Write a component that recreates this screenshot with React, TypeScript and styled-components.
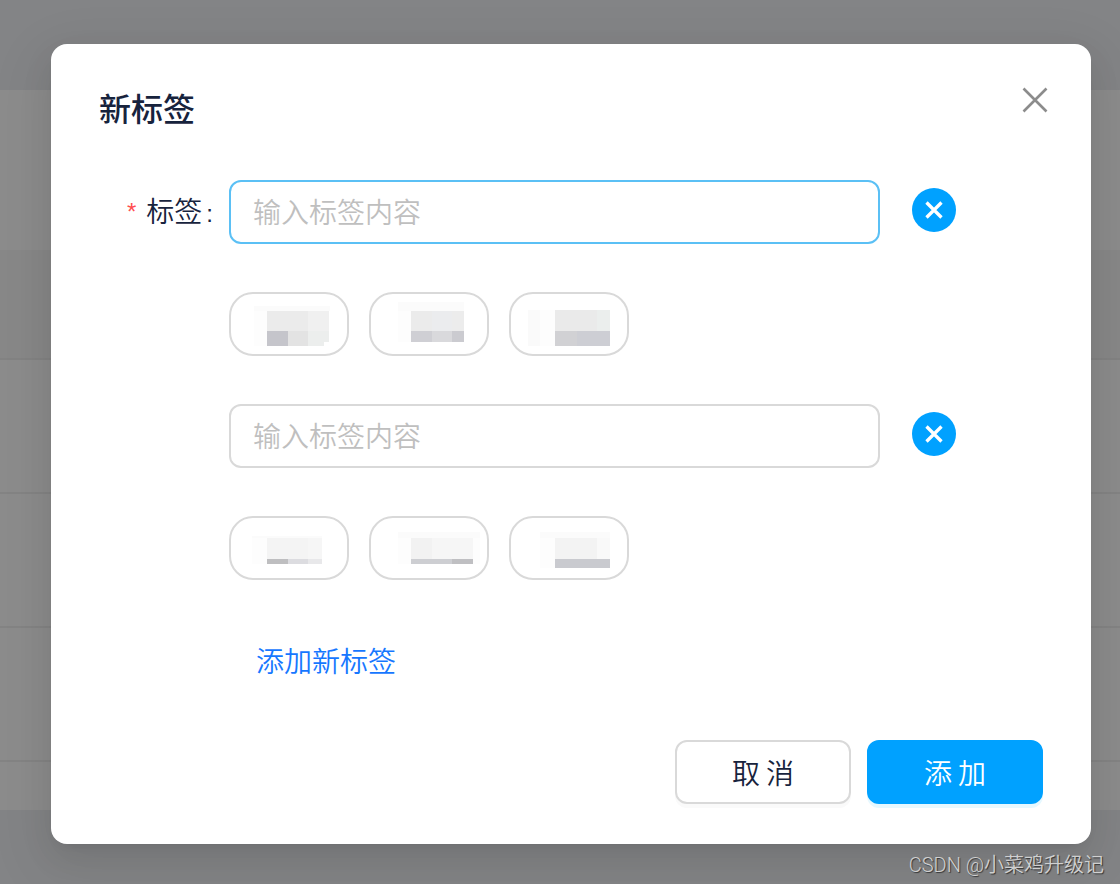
import React, { useState } from "react";
import styled, { createGlobalStyle, css } from "styled-components";

const GlobalStyle = createGlobalStyle`
  *, *::before, *::after { box-sizing: border-box; }
  body {
    margin: 0;
    background: #838486;
    color: #17233d;
    font-family: "Noto Sans CJK SC", sans-serif;
    font-size: 28px;
    font-weight: 350;
    line-height: 40px;
  }
  button, input { font: inherit; color: inherit; }
`;

const Screen = styled.div`
  position: relative;
  min-height: 100vh;
  overflow: hidden;
  display: flex;
  flex-direction: column;
`;

const Backdrop = styled.div`
  position: absolute;
  inset: 0;
  padding-top: 90px;
`;

const Sheet = styled.div`
  height: 720px;
  padding-top: 160px;
  background: #8c8c8c;
  overflow: hidden;
`;

const SheetHead = styled.div`
  height: 110px;
  background: #888888;
  border-bottom: 2px solid #838383;
`;

const SheetRow = styled.div`
  height: 134px;
  border-bottom: 2px solid #848484;
`;

const Dialog = styled.section`
  position: relative;
  margin: 44px 29px 0 51px;
  padding: 42px 48px 40px;
  background: #ffffff;
  border-radius: 16px;
  box-shadow:
    0 6px 12px -8px rgba(0, 0, 0, 0.12),
    0 12px 32px rgba(0, 0, 0, 0.08),
    0 18px 56px 16px rgba(0, 0, 0, 0.05);
`;

const Header = styled.header`
  display: flex;
  justify-content: space-between;
  align-items: flex-start;
  height: 94px;
`;

const Title = styled.h2`
  margin: 0;
  font-size: 32px;
  line-height: 42px;
  font-weight: 500;
`;

const CloseButton = styled.button`
  display: flex;
  padding: 0;
  margin-right: -6px;
  border: 0;
  background: none;
  color: #8c8c8c;
  cursor: pointer;
`;

const Form = styled.form`
  display: flex;
  flex-direction: column;
`;

const Group = styled.div`
  display: grid;
  grid-template-columns: 130px 1fr;
  row-gap: 48px;
  padding: 0 87px 48px 0;
`;

const Label = styled.label`
  display: flex;
  justify-content: flex-end;
  align-items: center;
  gap: 10px;
  height: 64px;
  padding-right: 16px;
`;

const Required = styled.span`
  color: #ff4d4f;
  font-family: "Liberation Sans", sans-serif;
  font-size: 24px;
  line-height: 40px;
`;

const Colon = styled.span`
  margin-left: 4px;
  font-family: "Liberation Sans", sans-serif;
  font-size: 24px;
`;

const FieldLine = styled.div`
  grid-column: 2;
  display: flex;
  gap: 32px;
`;

const TextInput = styled.input<{ $active?: boolean }>`
  flex: 1;
  min-width: 0;
  height: 64px;
  padding: 0 22px 2px;
  border: 2px solid ${(p) => (p.$active ? "#5bc0f5" : "#d9d9d9")};
  border-radius: 12px;
  background: #ffffff;
  outline: none;
  &::placeholder { color: #bfbfbf; opacity: 1; }
`;

const RemoveButton = styled.button`
  display: flex;
  align-items: center;
  justify-content: center;
  width: 44px;
  height: 44px;
  margin-top: 8px;
  padding: 0;
  border: 0;
  border-radius: 50%;
  background: #00a1ff;
  color: #ffffff;
  cursor: pointer;
`;

const Chips = styled.div`
  grid-column: 2;
  display: flex;
  gap: 20px;
`;

const Chip = styled.button`
  display: flex;
  width: 120px;
  height: 64px;
  padding: 0;
  border: 2px solid #d9d9d9;
  border-radius: 24px;
  background: #ffffff;
  overflow: hidden;
  cursor: pointer;
`;

const AddLink = styled.a`
  align-self: flex-start;
  margin: 12px 0 60px 157px;
  color: #1677ff;
  text-decoration: none;
`;

const Footer = styled.footer`
  display: flex;
  justify-content: flex-end;
  gap: 16px;
`;

const ActionButton = styled.button<{ $primary?: boolean }>`
  width: 176px;
  height: 64px;
  padding: 0;
  border-radius: 12px;
  cursor: pointer;
  ${(p) =>
    p.$primary
      ? css`
          border: 2px solid #00a1ff;
          background: #00a1ff;
          color: #ffffff;
          box-shadow: 0 4px 0 #e6f8ff;
        `
      : css`
          border: 2px solid #d9d9d9;
          background: #ffffff;
          box-shadow: 0 4px 0 #fafafa;
        `}
`;

const Credit = styled.p`
  position: relative;
  align-self: flex-end;
  margin: 7px 16px 0 0;
  color: #d0d0d0;
  font-family: Roboto, "Noto Sans CJK SC", sans-serif;
  font-size: 20px;
  line-height: 28px;
  text-shadow: 1px 1px 1px rgba(0, 0, 0, 0.6);
`;

/* x, y, width, height, fill */
type Tile = [number, number, number, number, string];

const FIRST_TILES: Tile[][] = [
  [
    [23, 12, 76, 5, "#fbfbfb"], [23, 17, 13, 35, "#fdfdfd"], [36, 17, 41, 20, "#ebebeb"],
    [77, 17, 21, 20, "#f0f0f0"], [36, 37, 21, 15, "#c5c5cb"], [57, 37, 20, 15, "#e3e3e3"],
    [77, 37, 21, 15, "#eceeed"], [93, 48, 6, 4, "#ffffff"],
  ],
  [
    [27, 8, 66, 9, "#fbfbfb"], [27, 17, 14, 31, "#fdfdfd"], [40, 17, 21, 20, "#ebebeb"],
    [61, 17, 20, 20, "#ebecee"], [81, 17, 12, 20, "#ececec"], [40, 37, 21, 11, "#cfcfd4"],
    [61, 37, 20, 11, "#d9d9dc"], [81, 37, 12, 11, "#cbcbd0"],
  ],
  [
    [17, 16, 12, 36, "#fafafa"], [29, 16, 15, 36, "#fdfdfd"], [44, 16, 42, 21, "#eaeaea"],
    [86, 16, 13, 21, "#ebeeed"], [44, 37, 22, 15, "#d1d1d4"], [66, 37, 33, 15, "#cdced4"],
  ],
];

const SECOND_TILES: Tile[][] = [
  [
    [21, 18, 70, 2, "#fbfbfb"], [21, 20, 15, 26, "#fdfdfd"], [36, 20, 41, 21, "#f4f4f4"],
    [77, 20, 14, 21, "#f6f6f6"], [36, 41, 21, 5, "#bebec0"], [57, 41, 20, 5, "#dcdce0"],
    [77, 41, 14, 5, "#e8e8ea"],
  ],
  [
    [27, 14, 82, 6, "#fbfbfb"], [27, 20, 13, 26, "#fdfdfd"], [102, 20, 7, 26, "#fdfdfd"],
    [40, 20, 21, 21, "#f2f2f2"], [61, 20, 41, 21, "#f6f6f6"], [40, 41, 41, 5, "#cdced2"],
    [81, 41, 21, 5, "#bfbfc2"],
  ],
  [
    [29, 14, 70, 6, "#fbfbfb"], [29, 20, 15, 30, "#fdfdfd"], [44, 20, 42, 21, "#f3f3f3"],
    [86, 20, 13, 21, "#f9f9f9"], [44, 41, 55, 9, "#c9cacf"],
  ],
];

function Cross({ size, inset, weight }: { size: number; inset: number; weight: number }) {
  const far = size - inset;
  return (
    <svg width={size} height={size} viewBox={`0 0 ${size} ${size}`} fill="none" aria-hidden="true">
      <path
        d={`M${inset} ${inset}L${far} ${far}M${far} ${inset}L${inset} ${far}`}
        stroke="currentColor"
        strokeWidth={weight}
      />
    </svg>
  );
}

function TagGroup({ id, first, chips }: { id: string; first?: boolean; chips: Tile[][] }) {
  const [value, setValue] = useState("");
  return (
    <Group>
      {first && (
        <Label htmlFor={id}>
          <Required>*</Required>
          <span>
            标签<Colon>:</Colon>
          </span>
        </Label>
      )}
      <FieldLine>
        <TextInput
          id={id}
          $active={first}
          aria-label="标签"
          placeholder="输入标签内容"
          value={value}
          onChange={(e) => setValue(e.target.value)}
        />
        <RemoveButton type="button" aria-label="删除">
          <Cross size={24} inset={4.5} weight={3.3} />
        </RemoveButton>
      </FieldLine>
      <Chips>
        {chips.map((tiles, i) => (
          <Chip key={i} type="button" aria-label={`标签 ${i + 1}`}>
            <svg width="116" height="60" viewBox="0 0 116 60" shapeRendering="crispEdges" aria-hidden="true">
              {tiles.map(([x, y, width, height, fill], n) => (
                <rect key={n} x={x} y={y} width={width} height={height} fill={fill} />
              ))}
            </svg>
          </Chip>
        ))}
      </Chips>
    </Group>
  );
}

export default function App() {
  return (
    <Screen>
      <GlobalStyle />
      <Backdrop aria-hidden="true">
        <Sheet>
          <SheetHead />
          <SheetRow />
          <SheetRow />
          <SheetRow />
        </Sheet>
      </Backdrop>
      <Dialog role="dialog" aria-labelledby="dialog-title">
        <Header>
          <Title id="dialog-title">新标签</Title>
          <CloseButton type="button" aria-label="关闭">
            <Cross size={28} inset={2.5} weight={2.6} />
          </CloseButton>
        </Header>
        <Form onSubmit={(e) => e.preventDefault()}>
          <TagGroup id="tag-1" first chips={FIRST_TILES} />
          <TagGroup id="tag-2" chips={SECOND_TILES} />
          <AddLink href="#add">添加新标签</AddLink>
          <Footer>
            <ActionButton type="button">取 消</ActionButton>
            <ActionButton type="submit" $primary>添 加</ActionButton>
          </Footer>
        </Form>
      </Dialog>
      <Credit>CSDN @小菜鸡升级记</Credit>
    </Screen>
  );
}
